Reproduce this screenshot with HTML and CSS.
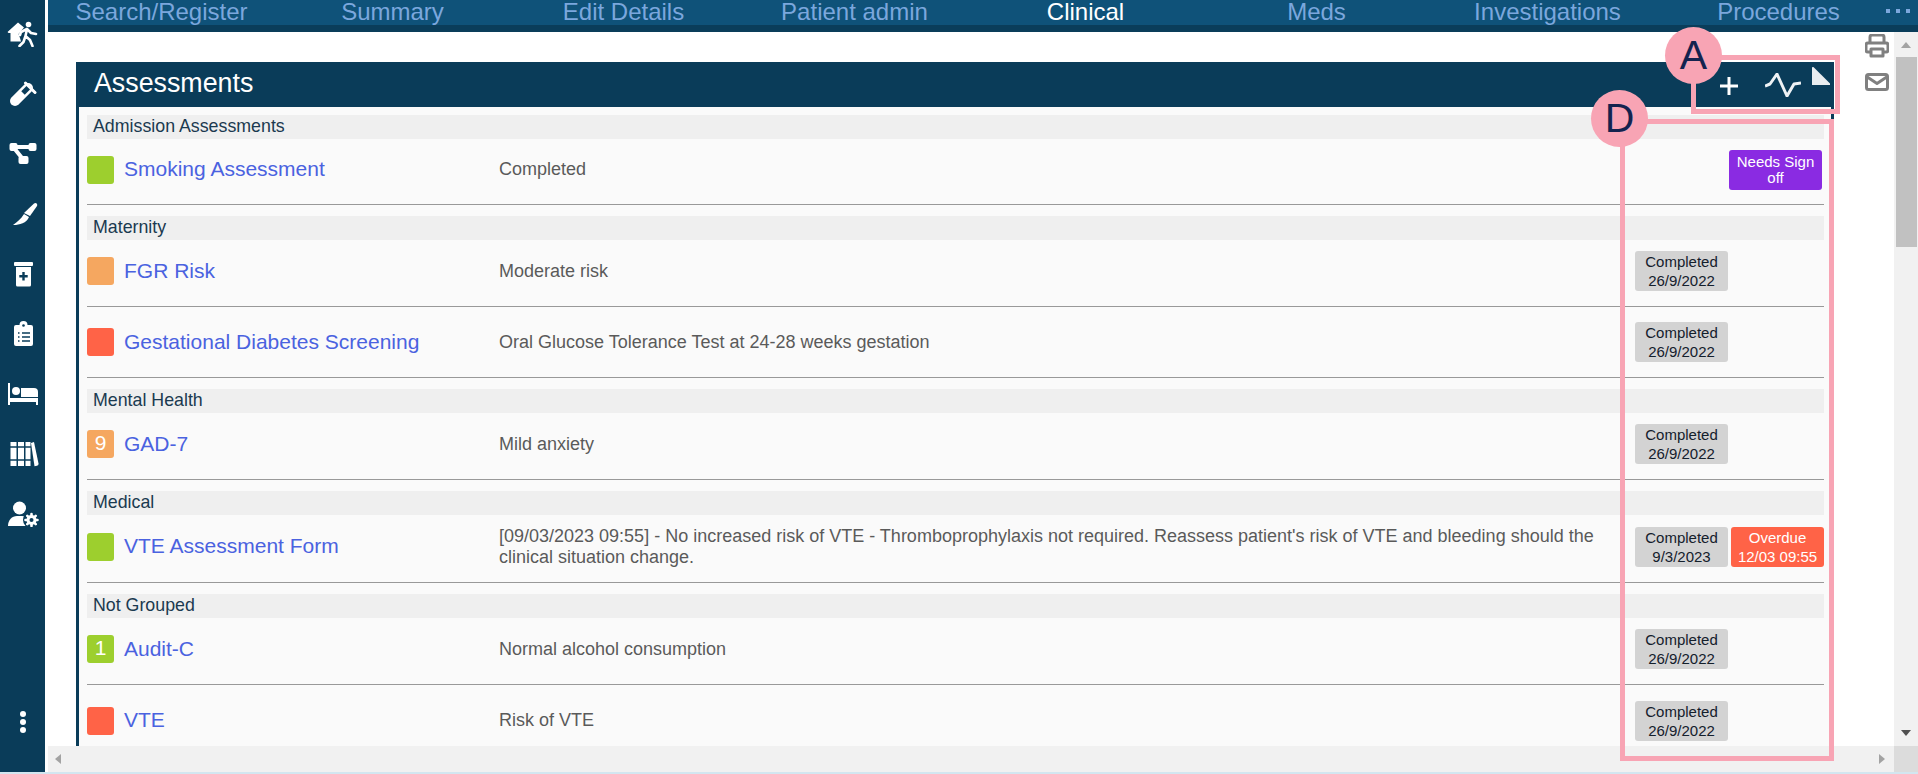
FILE: index.html
```html
<!DOCTYPE html>
<html lang="en">
<head>
<meta charset="utf-8">
<title>Assessments</title>
<link rel="stylesheet" href="styles.css">
</head>
<body>
<div class="app">
  <aside class="sidebar">
    <svg class="side-icon" viewBox="0 0 32 26"><path class="w" d="M.5 11 11 1.500l6 5-3 3.500-2.500 3L13 17l1 3.500H3.500V12h-2z"/><circle class="w" cx="21.500" cy="3.500" r="2.800"/><path class="wl" d="M20 8l-6 3-1 3M20 8l4 4 5 1M20 8l-1.500 7 4.500 4 2.500 6M18.500 15l-2 6-4 4"/></svg>
    <svg class="side-icon" viewBox="0 0 32 26"><path class="wl10" d="M8 20 21 7"/><path class="dl5" d="M16 12 23 5"/><path class="wl3" d="M18.500 2 28 11.500"/></svg>
    <svg class="side-icon" viewBox="0 0 32 26"><rect class="w" x="2.500" y="2" width="8" height="8" rx="2"/><rect class="w" x="21.500" y="2" width="8" height="8" rx="2"/><rect class="w" x="11.500" y="15" width="10" height="8" rx="2"/><path class="wl4" d="M7 6h18M7 7l8 10"/></svg>
    <svg class="side-icon" viewBox="0 0 32 26"><path class="w" d="M17 12 27 2.500c2-1.500 4 .5 3 2.500L23 15z"/><path class="w" d="M7 24c5 0 13-2 15-8l-5-3c-3 5-7 8-11 11z"/></svg>
    <svg class="side-icon" viewBox="0 0 32 26"><rect class="w" x="7" y="1" width="19" height="4" rx="1"/><path class="w" d="M9 6h15v18a1.500 1.500 0 0 1-1.500 1.500h-12A1.500 1.500 0 0 1 9 24z"/><path class="d" d="M15.300 11h2.400v3h3v2.400h-3v3h-2.400v-3h-3V14h3z"/></svg>
    <svg class="side-icon" viewBox="0 0 32 26"><path class="w" d="M9 4h3.500a4 4 0 0 1 8 0H24a2 2 0 0 1 2 2v17a2 2 0 0 1-2 2H9a2 2 0 0 1-2-2V6a2 2 0 0 1 2-2z"/><circle class="d" cx="16.500" cy="4.500" r="1.300"/><path class="dl" d="M11 12h1.500M15 12h8M11 16h1.500M15 16h8M11 20h1.500M15 20h8"/></svg>
    <svg class="side-icon" viewBox="0 0 32 24"><path class="w" d="M1 1h2v15h28v7h-2v-3H3v3H1z"/><circle class="w" cx="9" cy="9" r="4"/><path class="w" d="M14 6h13a4 4 0 0 1 4 4v5H14z"/></svg>
    <svg class="side-icon" viewBox="0 0 32 26"><path class="w" d="M3.500 1h6v24h-6zM11 1h6v24h-6zM18.500 1h5v24h-5z"/><path class="w" d="M24 2l3-1 4.500 21.500a2 2 0 0 1-1.500 2.300l-2.500.5z"/><path class="dl" d="M3 6h21M3 19h21"/></svg>
    <svg class="side-icon" viewBox="0 0 32 26"><circle class="w" cx="12.500" cy="7" r="6.500"/><path class="w" d="M1 25c0-6 4-10 9-10h5c5 0 8 4 8 10z"/><circle class="d" cx="24.500" cy="19" r="8.500"/><path class="wl" d="M24.500 13v12M18.500 19h12M20.300 14.800l8.400 8.400M28.700 14.800l-8.400 8.400"/><circle class="w" cx="24.500" cy="19" r="5"/><circle class="d" cx="24.500" cy="19" r="2"/></svg>
    <svg class="side-dots" viewBox="0 0 10 24"><circle class="w" cx="5" cy="4" r="3"/><circle class="w" cx="5" cy="12" r="3"/><circle class="w" cx="5" cy="20" r="3"/></svg>
  </aside>

  <div class="main">
    <nav class="nav">
      <div class="nav-items">
        <a class="nav-item">Search/Register</a>
        <a class="nav-item">Summary</a>
        <a class="nav-item">Edit Details</a>
        <a class="nav-item">Patient admin</a>
        <a class="nav-item active">Clinical</a>
        <a class="nav-item">Meds</a>
        <a class="nav-item">Investigations</a>
        <a class="nav-item">Procedures</a>
      </div>
      <div class="nav-more"><i></i><i></i><i></i></div>
    </nav>

    <div class="viewport">
      <div class="scroller">
        <section class="panel">
          <header class="panel-head">
            <h1 class="panel-title">Assessments</h1>
            <div class="panel-actions">
              <svg class="act-plus" viewBox="0 0 18 18"><path d="M9 0v18M0 9h18"/></svg>
              <svg class="act-wave" viewBox="0 0 36 24"><path d="M0 13l5-2L12 1l10 22 7-12 7-1"/></svg>
              <svg class="act-corner" viewBox="0 0 18 18"><path d="M0 1a1 1 0 0 1 1.700-.7L18 16.500V18H0z"/></svg>
            </div>
          </header>
          <div class="panel-body">
            <h2 class="group">Admission Assessments</h2>
            <div class="row short">
              <span class="sq green"></span>
              <a class="name">Smoking Assessment</a>
              <span class="summary">Completed</span>
              <div class="badges end"><span class="pill purple">Needs Sign off</span></div>
            </div>

            <h2 class="group">Maternity</h2>
            <div class="row">
              <span class="sq orange"></span>
              <a class="name">FGR Risk</a>
              <span class="summary">Moderate risk</span>
              <div class="badges"><span class="pill">Completed 26/9/2022</span></div>
            </div>
            <div class="row tall">
              <span class="sq red"></span>
              <a class="name">Gestational Diabetes Screening</a>
              <span class="summary">Oral Glucose Tolerance Test at 24-28 weeks gestation</span>
              <div class="badges"><span class="pill">Completed 26/9/2022</span></div>
            </div>

            <h2 class="group">Mental Health</h2>
            <div class="row">
              <span class="sq orange">9</span>
              <a class="name">GAD-7</a>
              <span class="summary">Mild anxiety</span>
              <div class="badges"><span class="pill">Completed 26/9/2022</span></div>
            </div>

            <h2 class="group">Medical</h2>
            <div class="row long">
              <span class="sq green"></span>
              <a class="name">VTE Assessment Form</a>
              <span class="summary">[09/03/2023 09:55] - No increased risk of VTE - Thromboprophylaxis not required. Reassess patient's risk of VTE and bleeding should the clinical situation change.</span>
              <div class="badges"><span class="pill">Completed 9/3/2023</span><span class="pill overdue">Overdue 12/03 09:55</span></div>
            </div>

            <h2 class="group">Not Grouped</h2>
            <div class="row">
              <span class="sq green">1</span>
              <a class="name">Audit-C</a>
              <span class="summary">Normal alcohol consumption</span>
              <div class="badges"><span class="pill">Completed 26/9/2022</span></div>
            </div>
            <div class="row tall">
              <span class="sq red"></span>
              <a class="name">VTE</a>
              <span class="summary">Risk of VTE</span>
              <div class="badges"><span class="pill">Completed 26/9/2022</span></div>
            </div>
          </div>
        </section>
        <div class="tools">
          <svg class="tool" viewBox="0 0 24 24"><path d="M5 9V3a2 2 0 0 1 2-2h10a2 2 0 0 1 2 2v6M5 18H3a2 2 0 0 1-2-2v-5a2 2 0 0 1 2-2h18a2 2 0 0 1 2 2v5a2 2 0 0 1-2 2h-2M6 15h12v7H6z"/></svg>
          <svg class="tool mail" viewBox="0 0 24 18"><rect x="1.500" y="1.500" width="21" height="15" rx="2"/><path d="M1.500 3.500 12 10.500l10.500-7"/></svg>
        </div>
      </div>
      <div class="vbar">
        <span class="arrow-up"></span>
        <span class="thumb"></span>
        <span class="arrow-down"></span>
      </div>
    </div>

    <div class="hrow">
      <div class="hbar"><span class="arrow-left"></span><span class="arrow-right"></span></div>
      <div class="corner"></div>
    </div>
  </div>
</div>
<div class="strip"></div>

<div class="note note-a-box"></div>
<div class="note note-d-box"></div>
<div class="bubble bubble-a">A</div>
<div class="bubble bubble-d">D</div>
</body>
</html>
```

FILE: styles.css
```css
* { box-sizing: border-box; }
html, body { margin: 0; height: 100%; overflow: hidden; }
body { background: #fff; font-family: "Liberation Sans", Arial, sans-serif; position: relative; }

.app { display: flex; height: 772px; }
.strip { height: 2px; background: #d3e6f0; }

/* sidebar */
.sidebar { width: 45px; flex: none; background: #0a3c59; display: flex; flex-direction: column; align-items: center; padding: 21px 0 38px; gap: 34px; }
.side-icon { width: 32px; height: 26px; flex: none; }
.side-dots { width: 10px; height: 24px; margin-top: auto; }
.w { fill: #fff; }
.d { fill: #0a3c59; }
.wl { fill: none; stroke: #fff; stroke-width: 2.6; stroke-linecap: round; stroke-linejoin: round; }
.wl3 { fill: none; stroke: #fff; stroke-width: 3; stroke-linecap: round; }
.wl4 { fill: none; stroke: #fff; stroke-width: 4; }
.wl10 { fill: none; stroke: #fff; stroke-width: 10; stroke-linecap: round; }
.dl5 { fill: none; stroke: #0a3c59; stroke-width: 5; }
.dl { fill: none; stroke: #0a3c59; stroke-width: 1.300; }

/* main */
.main { flex: 1; min-width: 0; margin-left: 3px; display: flex; flex-direction: column; }
.nav { position: relative; height: 32px; flex: none; background: #0f5279; border-bottom: 7px solid #0a3d5a; overflow: hidden; }
.nav-items { display: grid; grid-template-columns: repeat(8, 231px); margin: -1px 0 0 -2px; }
.nav-item { text-align: center; font-size: 24px; line-height: 25px; color: #7ba7dd; white-space: nowrap; }
.nav-item.active { color: #fff; }
.nav-more { position: absolute; left: 1838px; top: 9px; display: flex; gap: 6px; }
.nav-more i { width: 4px; height: 4px; background: #7ba7dd; }

.viewport { flex: 1; min-height: 0; display: flex; }
.scroller { flex: 1; min-width: 0; overflow: hidden; display: flex; align-items: flex-start; padding: 2px 0 0 28px; background: #fff; }
.panel { width: 1758px; flex: none; margin-top: 28px; background: #fafafa; border: solid #0a3c59; border-width: 0 3px; }
.panel-head { height: 45px; margin: 0 -3px; background: #0a3c59; display: flex; justify-content: space-between; align-items: flex-start; padding: 0 4px 0 18px; }
.panel-title { margin: 0; font-size: 26.8px; font-weight: 400; line-height: 43px; color: #fff; }
.panel-actions { display: flex; align-items: flex-start; }
.act-plus { width: 18px; height: 18px; margin-top: 15px; fill: none; stroke: #fff; stroke-width: 3; }
.act-wave { width: 36px; height: 24px; margin: 11px 0 0 27px; fill: none; stroke: #eef2f5; stroke-width: 3; stroke-linejoin: round; }
.act-corner { width: 18px; height: 18px; margin: 5px 0 0 11px; fill: #e9edf0; }

.panel-body { padding: 8px 7px 0 8px; }
.group { margin: 11px 0 0; height: 24px; padding-left: 6px; background: #efefef; font-size: 17.8px; font-weight: 400; line-height: 23px; color: #1b3a50; }
.group:first-child { margin-top: 0; line-height: 22px; }

.row { display: grid; grid-template-columns: 37px 375px 1fr 189px; align-items: center; height: 67px; padding-bottom: 4px; border-bottom: 1px solid #999; }
.row.short { height: 66px; }
.row.long { height: 68px; }
.row.tall { height: 71px; padding-bottom: 0; }
.row.tall:last-child { border-bottom: 0; }

.sq { width: 27px; height: 28px; border-radius: 3px; color: #fff; font-size: 21px; line-height: 26px; text-align: center; }
.green { background: #9dcf2e; }
.orange { background: #f5a760; }
.red { background: #ff6347; }
.name { font-size: 21px; line-height: 24px; margin-top: -1px; color: #4a62e0; white-space: nowrap; }
.summary { font-size: 18px; line-height: 21px; color: #5a5a5a; padding-right: 10px; }

.badges { display: flex; gap: 3px; }
.badges.end { justify-content: flex-end; padding-right: 2px; }
.pill { width: 93px; height: 40px; padding: 0 3px; display: flex; align-items: center; justify-content: center; text-align: center; background: #d3d3d3; border-radius: 3px; font-size: 15px; line-height: 19px; color: #14202c; }
.pill.purple { background: #8a2be2; color: #fff; line-height: 16px; }
.pill.overdue { background: #ff6347; color: #fff; }

.tools { display: flex; flex-direction: column; gap: 15px; margin-left: 31px; flex: none; }
.tool { width: 24px; height: 24px; fill: none; stroke: #808080; stroke-width: 3; stroke-linejoin: round; }
.tool.mail { height: 18px; }

/* scrollbars */
.vbar { width: 24px; flex: none; background: #f1f1f1; display: flex; flex-direction: column; padding: 10px 0; }
.thumb { width: 21px; height: 190px; margin: 9px 0 0 2px; background: #c1c1c1; }
.arrow-up { align-self: center; width: 0; height: 0; border: solid transparent; border-width: 0 5.500px 6px; border-bottom-color: #a3a3a3; }
.arrow-down { align-self: center; margin-top: auto; width: 0; height: 0; border: solid transparent; border-width: 6px 5.500px 0; border-top-color: #505050; }
.hrow { height: 26px; flex: none; display: flex; }
.hbar { flex: 1; background: #f1f1f1; display: flex; justify-content: space-between; align-items: center; padding: 0 9px 0 7px; }
.arrow-left { width: 0; height: 0; border: solid transparent; border-width: 5.500px 6px 5.500px 0; border-right-color: #a3a3a3; }
.arrow-right { width: 0; height: 0; border: solid transparent; border-width: 5.500px 0 5.500px 6px; border-left-color: #a3a3a3; }
.corner { width: 24px; background: #dcdcdc; }

/* annotations */
.note { position: absolute; border: 5px solid #f8a4b4; }
.note-a-box { left: 1691px; top: 55px; width: 149px; height: 59px; }
.note-d-box { left: 1620px; top: 119px; width: 214px; height: 642px; }
.bubble { position: absolute; width: 57px; height: 57px; border-radius: 50%; background: #f8a4b4; color: #14234f; font-size: 41px; line-height: 57px; text-align: center; }
.bubble-a { left: 1665px; top: 27px; }
.bubble-d { left: 1591px; top: 90px; }
```
